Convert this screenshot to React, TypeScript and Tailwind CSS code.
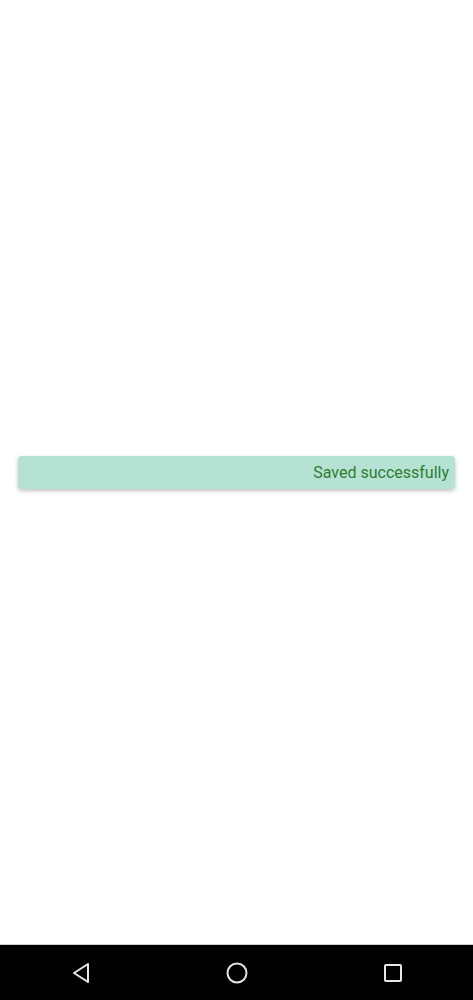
export default function App() {
  return (
    <div className="flex h-[1000px] w-full flex-col bg-white" style={{ fontFamily: "Roboto, 'Noto Sans', sans-serif" }}>
      <div className="flex flex-1 flex-col justify-center px-[18px]">
        <div className="flex h-[33px] items-center justify-end rounded-[4px] bg-[#b6e2d3] pr-[6px] pt-[2px] shadow-[0_2px_4px_rgba(0,0,0,0.25)]">
          <span className="text-[16px] text-[#2e7d32]">Saved successfully</span>
        </div>
      </div>
      <div className="flex h-[56px] items-center justify-between border-t border-[#cfcfcf] bg-black">
        <div className="flex w-[158px] justify-center pl-[4px]">
          <svg width="20" height="22" viewBox="0 0 20 22">
            <path d="M17 2 L3 11 L17 20 Z" fill="none" stroke="#e6e6e6" strokeWidth="2" strokeLinejoin="round" />
          </svg>
        </div>
        <div className="flex w-[158px] justify-center">
          <svg width="22" height="22" viewBox="0 0 22 22">
            <circle cx="11" cy="11" r="9.5" fill="none" stroke="#e6e6e6" strokeWidth="2" />
          </svg>
        </div>
        <div className="flex w-[158px] justify-center pr-[2px]">
          <svg width="20" height="20" viewBox="0 0 20 20">
            <rect x="2" y="2" width="16" height="16" rx="1" fill="none" stroke="#e6e6e6" strokeWidth="2" />
          </svg>
        </div>
      </div>
    </div>
  );
}
